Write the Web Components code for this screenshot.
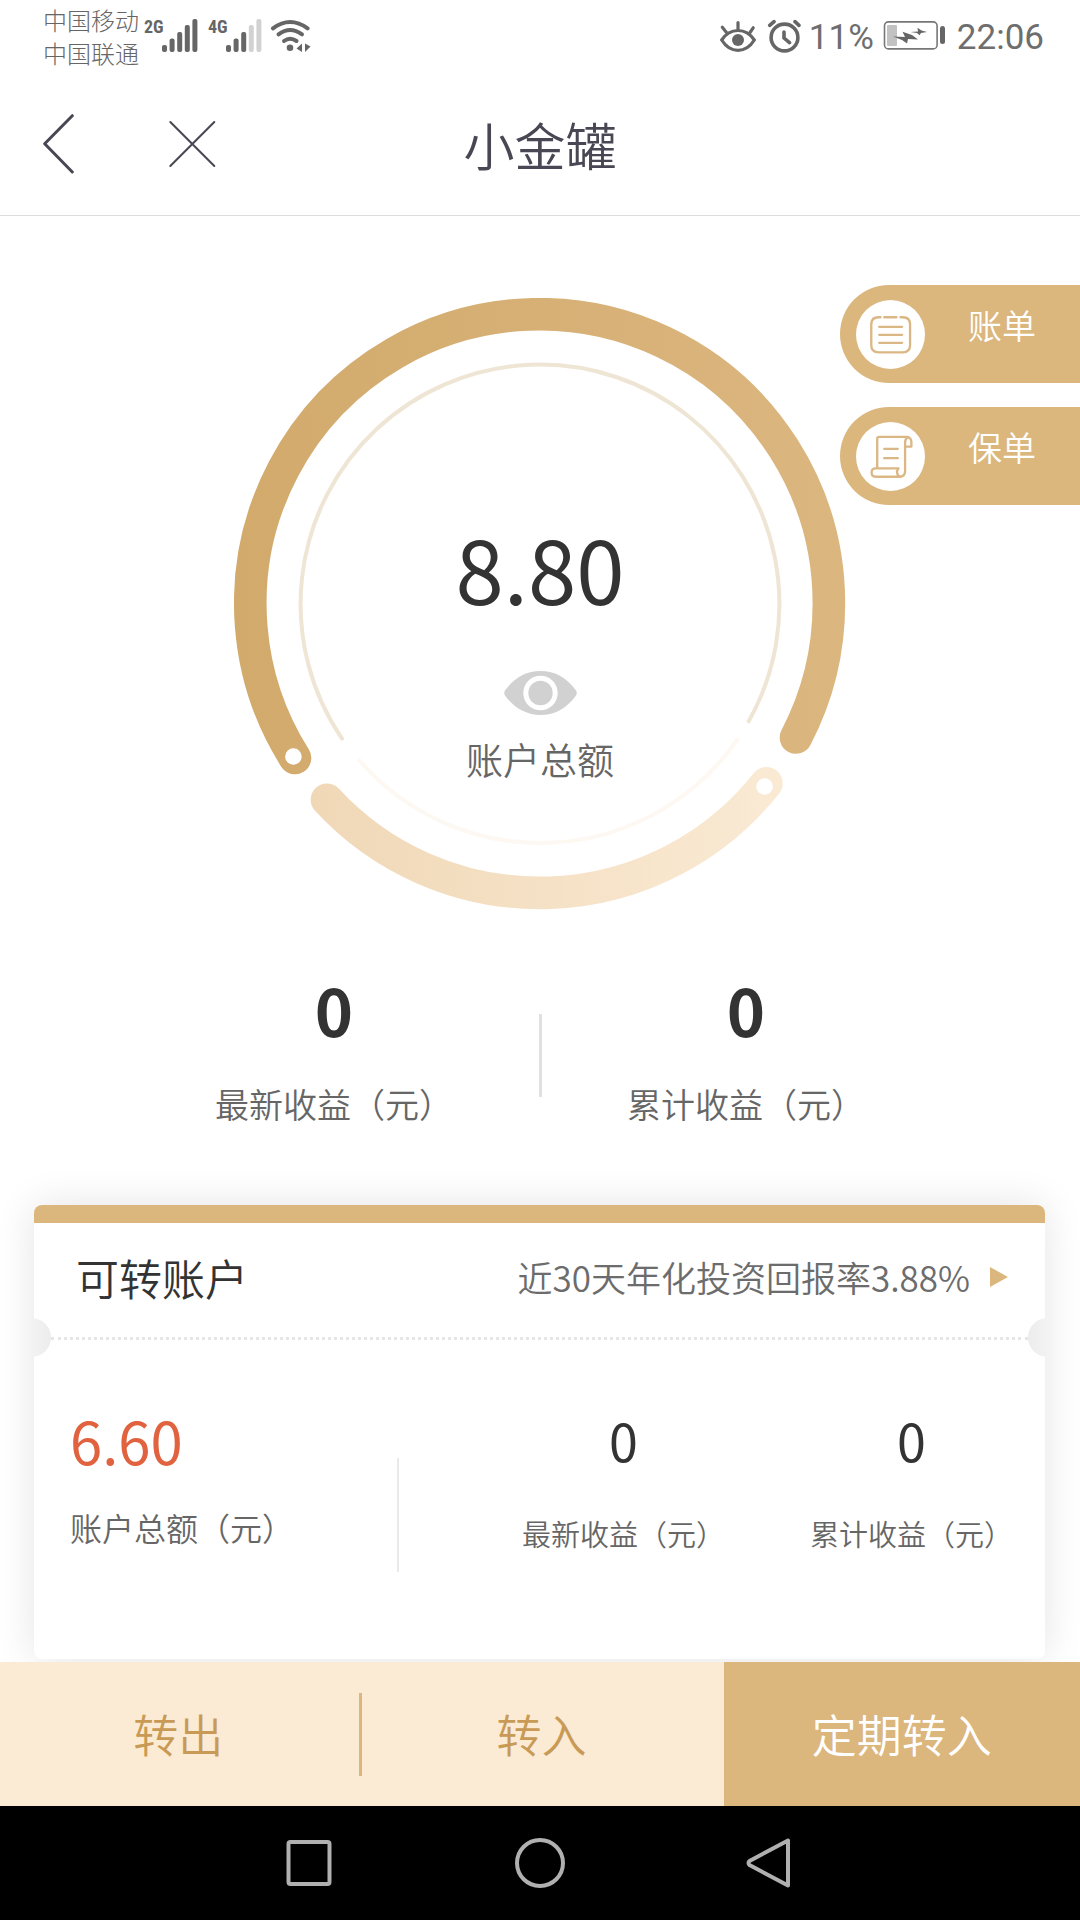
<!DOCTYPE html>
<html lang="zh-CN">
<head>
<meta charset="utf-8">
<meta name="viewport" content="width=device-width, initial-scale=1">
<title>小金罐</title>
<style>
  :root {
    --gold: #dbb67d;
    --gold-deep: #c89a55;
    --cream: #fbead4;
    --ink: #333;
    --muted: #666;
    --rule: #e0e0e0;
  }
  body {
    margin: 0;
    background: #fff;
    color: var(--ink);
    font-family: "Noto Sans CJK SC", "Noto Sans", sans-serif;
  }
</style>
</head>
<body>
<jar-app></jar-app>

<script>
const BASE = `
  *, *::before, *::after { box-sizing: border-box; }
  button { border: 0; padding: 0; margin: 0; background: none; color: inherit; font: inherit; cursor: pointer; }
  svg { display: block; }
`;
function define(name, html) {
  const template = document.createElement('template');
  template.innerHTML = `<style>${BASE}</style>${html}`;
  customElements.define(name, class extends HTMLElement {
    constructor() {
      super();
      this.attachShadow({ mode: 'open' }).append(template.content.cloneNode(true));
    }
  });
}

define('signal-bars', `
  <style>
    :host { display: flex; align-items: flex-start; color: #666; }
    span { width: 18px; font: 700 18px/16px "Roboto Condensed", Roboto, sans-serif; }
    :host([weak]) .high { fill: #d2d2d2; }
  </style>
  <span><slot></slot></span>
  <svg width="36" height="34" viewBox="0 0 36 34" fill="#666">
    <rect x="0" y="26" width="5" height="7" rx="2"/>
    <rect x="7.6" y="19.5" width="5" height="13.5" rx="2"/>
    <rect x="15.2" y="13" width="5" height="20" rx="2"/>
    <rect class="high" x="22.8" y="6" width="5" height="27" rx="2"/>
    <rect class="high" x="30.4" y="0" width="5" height="33" rx="2"/>
  </svg>
`);

define('status-bar', `
  <style>
    :host { display: flex; justify-content: space-between; align-items: center; height: 72px; padding: 0 36px 0 43px; color: #666; }
    .side { display: flex; align-items: center; }
    .carriers { font-size: 24px; line-height: 33px; font-weight: 300; margin-right: 5px; }
    signal-bars + signal-bars { margin-left: 10px; }
    .wifi { margin-left: 8px; }
    .num { padding-top: 3px; font: 400 35px/42px Roboto, sans-serif; color: #6e6e6e; }
    .right .num:first-of-type { margin: 0 9px 0 8px; }
    .alarm { margin-left: 10px; }
    .battery { margin-right: 12px; }
  </style>
  <div class="side left">
    <div class="carriers"><div>中国移动</div><div>中国联通</div></div>
    <signal-bars>2G</signal-bars>
    <signal-bars weak>4G</signal-bars>
    <svg class="wifi" width="42" height="34" viewBox="271 19 42 34" fill="none" stroke="#666" stroke-width="4" stroke-linecap="round">
      <path d="M274 28.3Q291 15.6 308.600 28.300"/>
      <path d="M279.500 34.300Q291 25.600 303 34.300"/>
      <path d="M285 41Q291 36.400 297.500 41"/>
      <circle cx="291" cy="47.700" r="3.300" fill="#666" stroke="none"/>
      <path d="M303 43.500V52L297.500 48.500ZM306 43.500V52L311.500 46.500Z" fill="#666" stroke="none"/>
    </svg>
  </div>
  <div class="side right">
    <svg width="38" height="34" viewBox="720 19 38 34" fill="none" stroke="#666" stroke-width="3.200" stroke-linecap="round">
      <path d="M722.700 40Q729 30.500 739 30.500T755.300 40Q749 50.300 739 50.300T722.700 40ZM739 22.600V29M723.300 27.300L727.500 32.500M754.200 27.800L751 32.500"/>
      <circle cx="739" cy="40" r="6" fill="#666" stroke="none"/>
    </svg>
    <svg class="alarm" width="34" height="34" viewBox="768 19 34 34" fill="none" stroke="#666" stroke-width="3.600" stroke-linecap="round">
      <circle cx="785.500" cy="37.500" r="13.400"/>
      <path d="M785 32V38L790.500 42.700M770.700 25.300L775 21.700M800 25.300L796 21.700"/>
    </svg>
    <span class="num">11%</span>
    <svg class="battery" width="62" height="30" viewBox="883 22 62 30">
      <rect x="884.500" y="22.900" width="52.600" height="27" rx="4" fill="none" stroke="#777" stroke-width="1.600"/>
      <rect x="887" y="26" width="10" height="21" rx="1" fill="#c2c2c2"/>
      <rect x="940" y="27" width="5" height="18" rx="2.500" fill="#666"/>
      <path d="M893 37.500L905 38L902.500 32.700L912 36L918 40.500L908 40L907 44.500L902 41ZM910.500 33L918 32.500L917.500 28.700L921.500 31.500L927 33L921 34L919.500 36.300L917 34Z" fill="#666"/>
    </svg>
    <span class="num">22:06</span>
  </div>
`);

define('title-bar', `
  <style>
    :host { display: grid; grid-template-columns: 1fr auto 1fr; align-items: center; height: 144px; padding: 0 42px; border-bottom: 1px solid #dcdcdc; color: #484753; }
    .tools { display: flex; align-items: center; gap: 94px; }
    h1 { margin: 0; font-size: 51px; line-height: 60px; font-weight: 350; }
  </style>
  <div class="tools">
    <button type="button" aria-label="返回">
      <svg width="32" height="62" viewBox="42 113 32 62" fill="none" stroke="currentColor" stroke-width="3" stroke-linecap="round" stroke-linejoin="round"><path d="M72.300 115.700L44.700 143.800L72.300 172"/></svg>
    </button>
    <button type="button" aria-label="关闭">
      <svg width="48" height="48" viewBox="168 120 48 48" fill="none" stroke="currentColor" stroke-width="2" stroke-linecap="round"><path d="M170.300 122L214.300 166M214.300 122L170.300 166"/></svg>
    </button>
  </div>
  <h1><slot></slot></h1>
`);

define('side-tab', `
  <style>
    :host { display: block; }
    button { display: flex; align-items: center; width: 240px; height: 98px; padding: 0 0 0 16px; border-radius: 49px 0 0 49px; background: var(--gold); color: #fff; }
    .disc { width: 69px; height: 69px; border-radius: 50%; background: #fff; }
    .text { margin-left: 43px; padding-bottom: 19px; font-size: 34px; line-height: 40px; font-weight: 350; }
  </style>
  <button type="button"><span class="disc"><slot name="icon"></slot></span><span class="text"><slot></slot></span></button>
`);

define('total-gauge', `
  <style>
    :host { display: grid; justify-items: center; width: 612px; max-width: 100%; margin: 0 auto; }
    .dial, .content { grid-area: 1 / 1; }
    .dial { width: 100%; height: auto; }
    .content { display: flex; flex-direction: column; align-items: center; padding-top: 225px; }
    .amount { font-size: 87px; line-height: 88px; font-weight: 400; }
    button { margin: 60px 0 24px; }
    .caption { font-size: 37px; line-height: 40px; font-weight: 350; color: var(--muted); }
  </style>
  <svg class="dial" viewBox="-306 -306 612 612" fill="none" stroke-linecap="round" aria-hidden="true">
    <defs>
      <linearGradient id="g1" gradientUnits="userSpaceOnUse" x1="-300" y1="0" x2="300" y2="0"><stop offset="0" stop-color="#d2aa6c"/><stop offset="1" stop-color="#dbb67f"/></linearGradient>
      <linearGradient id="g2" gradientUnits="userSpaceOnUse" x1="-225" y1="0" x2="240" y2="0"><stop offset="0" stop-color="#f0d8b7"/><stop offset="1" stop-color="#faead4"/></linearGradient>
    </defs>
    <path d="M-245 154A289.300 289.300 0 1 1 256 133.500" stroke="url(#g1)" stroke-width="32.600"/>
    <path d="M-213 195.700A289.300 289.300 0 0 0 226.400 179.300" stroke="url(#g2)" stroke-width="32.600"/>
    <path d="M-198 134.600A239.400 239.400 0 1 1 208.700 117.300" stroke="#efe5d4" stroke-width="4"/>
    <path d="M-180.500 156.500A239.400 239.400 0 0 0 197 136" stroke="#fdf8f1" stroke-width="4"/>
    <circle cx="-246.600" cy="152.500" r="8.300" fill="#fff"/>
    <circle cx="224.600" cy="182.500" r="8.300" fill="#fff"/>
  </svg>
  <div class="content">
    <div class="amount"><slot></slot></div>
    <button type="button" aria-label="显示或隐藏金额">
      <svg width="74" height="44" viewBox="-1 0 74 44"><path d="M1 19.500C10 7 22 0 36.500 0S63 7 72 19.500Q73.500 22 72 24.500C63 37 51 44 36.500 44S10 37 1 24.500Q-.5 22 1 19.500Z" fill="#d1d1d1"/><circle cx="36.500" cy="22" r="14.700" fill="none" stroke="#fff" stroke-width="5"/></svg>
    </button>
    <div class="caption"><slot name="caption"></slot></div>
  </div>
`);

define('figure-pair', `
  <style>
    :host { display: flex; flex-direction: column; align-items: center; }
    .value { font-size: 52px; line-height: 60px; }
    .label { margin-top: 43px; font-size: 29px; line-height: 40px; color: var(--muted); font-weight: 350; white-space: nowrap; }
    :host([size="large"]) .value { font-size: 65px; line-height: 66px; font-weight: 700; }
    :host([size="large"]) .label { margin-top: 42px; font-size: 34px; }
    :host([size="lead"]) { align-items: flex-start; }
    :host([size="lead"]) .value { font-size: 58px; color: #e0623f; }
    :host([size="lead"]) .label { margin-top: 37px; font-size: 32px; }
  </style>
  <div class="value"><slot></slot></div>
  <div class="label"><slot name="label"></slot></div>
`);

define('income-summary', `
  <style>
    :host { display: flex; justify-content: space-between; width: 76%; margin: 0 auto; padding-top: 66px; }
    ::slotted(*) { flex: 1; }
    .rule { align-self: flex-end; width: 3px; height: 83px; margin-bottom: 27px; background: var(--rule); }
  </style>
  <slot name="before"></slot><div class="rule"></div><slot name="after"></slot>
`);

define('account-card', `
  <style>
    :host { display: block; margin: 81px 35px 3px 34px; border-radius: 8px; background: #fff; box-shadow: 0 0 40px rgba(0,0,0,.11); }
    .clip { position: relative; overflow: hidden; border-radius: 8px; border-top: 18px solid var(--gold); }
    header { display: flex; justify-content: space-between; align-items: center; height: 114px; padding: 0 37px 6px 42px; }
    h2 { margin: 0; font-size: 43px; line-height: 50px; font-weight: 350; }
    a { display: flex; align-items: center; gap: 20px; font-size: 35px; line-height: 50px; font-weight: 350; color: #6c6c6c; text-decoration: none; white-space: nowrap; }
    .tear { margin: 0 17px; border-top: 3px dotted #e6e6e6; }
    .notch { position: absolute; top: 95px; width: 39px; height: 39px; border-radius: 50%; background: linear-gradient(270deg, #ececec, #fafafa); }
    .notch.l { left: -22px; }
    .notch.r { right: -22px; background: linear-gradient(90deg, #ececec, #fafafa); }
    .body { display: flex; padding: 70px 32px 0 36px; height: 319px; }
    .lead { flex: 1; }
    .rule { width: 2px; height: 114px; margin: 48px 123px 0 0; background: #e9e9e9; }
    .rest { display: flex; gap: 85px; }
  </style>
  <div class="clip">
    <header>
      <h2><slot name="title"></slot></h2>
      <a href="#rate"><slot name="rate"></slot><svg width="18" height="20" viewBox="0 0 18 20"><path d="M0 0L18 10L0 20Z" fill="#dbb67d"/></svg></a>
    </header>
    <div class="tear"></div>
    <span class="notch l"></span><span class="notch r"></span>
    <div class="body">
      <div class="lead"><slot name="lead"></slot></div>
      <div class="rule"></div>
      <div class="rest"><slot></slot></div>
    </div>
  </div>
`);

define('action-bar', `
  <style>
    :host { position: relative; display: grid; grid-template-columns: 33% 1fr 33%; height: 144px; background: var(--cream); }
    button { display: flex; align-items: center; justify-content: center; font-size: 45px; line-height: 54px; font-weight: 350; color: var(--gold-deep); }
    .rest { padding-left: 3px; background: linear-gradient(var(--gold), var(--gold)) 3px center / 3px 83px no-repeat; }
    .main { background: var(--gold); color: #fff; }
  </style>
  <button type="button">转出</button>
  <button type="button" class="rest">转入</button>
  <button type="button" class="main">定期转入</button>
`);

define('system-nav', `
  <style>
    :host { display: flex; align-items: center; justify-content: center; gap: 181px; height: 114px; background: #000; }
  </style>
  <button type="button" aria-label="最近任务"><svg width="50" height="50" viewBox="0 0 50 50" fill="none" stroke="#b0b0b0" stroke-width="4"><rect x="4.500" y="4" width="41" height="42" rx="2"/></svg></button>
  <button type="button" aria-label="主屏幕"><svg width="50" height="50" viewBox="0 0 50 50" fill="none" stroke="#b0b0b0" stroke-width="4"><circle cx="25" cy="25" r="23"/></svg></button>
  <button type="button" aria-label="后退"><svg width="50" height="50" viewBox="0 0 50 50" fill="none" stroke="#b0b0b0" stroke-width="4" stroke-linejoin="round"><path d="M42 2.500V47.500L3.500 27Q1.500 25 3.500 23Z"/></svg></button>
`);

define('jar-app', `
  <style>
    :host { display: flex; flex-direction: column; min-height: 100vh; }
    main { flex: 1; position: relative; padding-top: 82px; }
    .tabs { position: absolute; top: 69px; right: 0; display: grid; gap: 24px; }
  </style>
  <status-bar></status-bar>
  <title-bar>小金罐</title-bar>
  <main>
    <total-gauge>8.80<span slot="caption">账户总额</span></total-gauge>
    <nav class="tabs">
      <side-tab>
        <svg slot="icon" width="69" height="69" viewBox="107 87 208 208" fill="none" stroke="#dbb785" stroke-width="7" stroke-linecap="round">
          <path d="M181 139H175Q153 139 153 161V223Q153 245 175 245H248Q270 245 270 223V161Q270 139 248 139H241M192 139H229M177 168H246M177 192H246M177 216H246"/>
        </svg>账单
      </side-tab>
      <side-tab>
        <svg slot="icon" width="69" height="69" viewBox="109 453 208 208" fill="none" stroke="#dbb785" stroke-width="7" stroke-linecap="round" stroke-linejoin="round">
          <path d="M173 591V504Q173 498 179 498H262Q276 500 276 514V527H258M266 498Q257 503 257 514V602Q256 617 243 618H168Q156 617 156 605T168 593H237Q231 600 233 607Q235 617 243 618M194 534H235M194 562H235"/>
        </svg>保单
      </side-tab>
    </nav>
    <income-summary>
      <figure-pair slot="before" size="large">0<span slot="label">最新收益（元）</span></figure-pair>
      <figure-pair slot="after" size="large">0<span slot="label">累计收益（元）</span></figure-pair>
    </income-summary>
    <account-card>
      <span slot="title">可转账户</span>
      <span slot="rate">近30天年化投资回报率3.88%</span>
      <figure-pair slot="lead" size="lead">6.60<span slot="label">账户总额（元）</span></figure-pair>
      <figure-pair>0<span slot="label">最新收益（元）</span></figure-pair>
      <figure-pair>0<span slot="label">累计收益（元）</span></figure-pair>
    </account-card>
  </main>
  <action-bar></action-bar>
  <system-nav></system-nav>
`);
</script>
</body>
</html>
